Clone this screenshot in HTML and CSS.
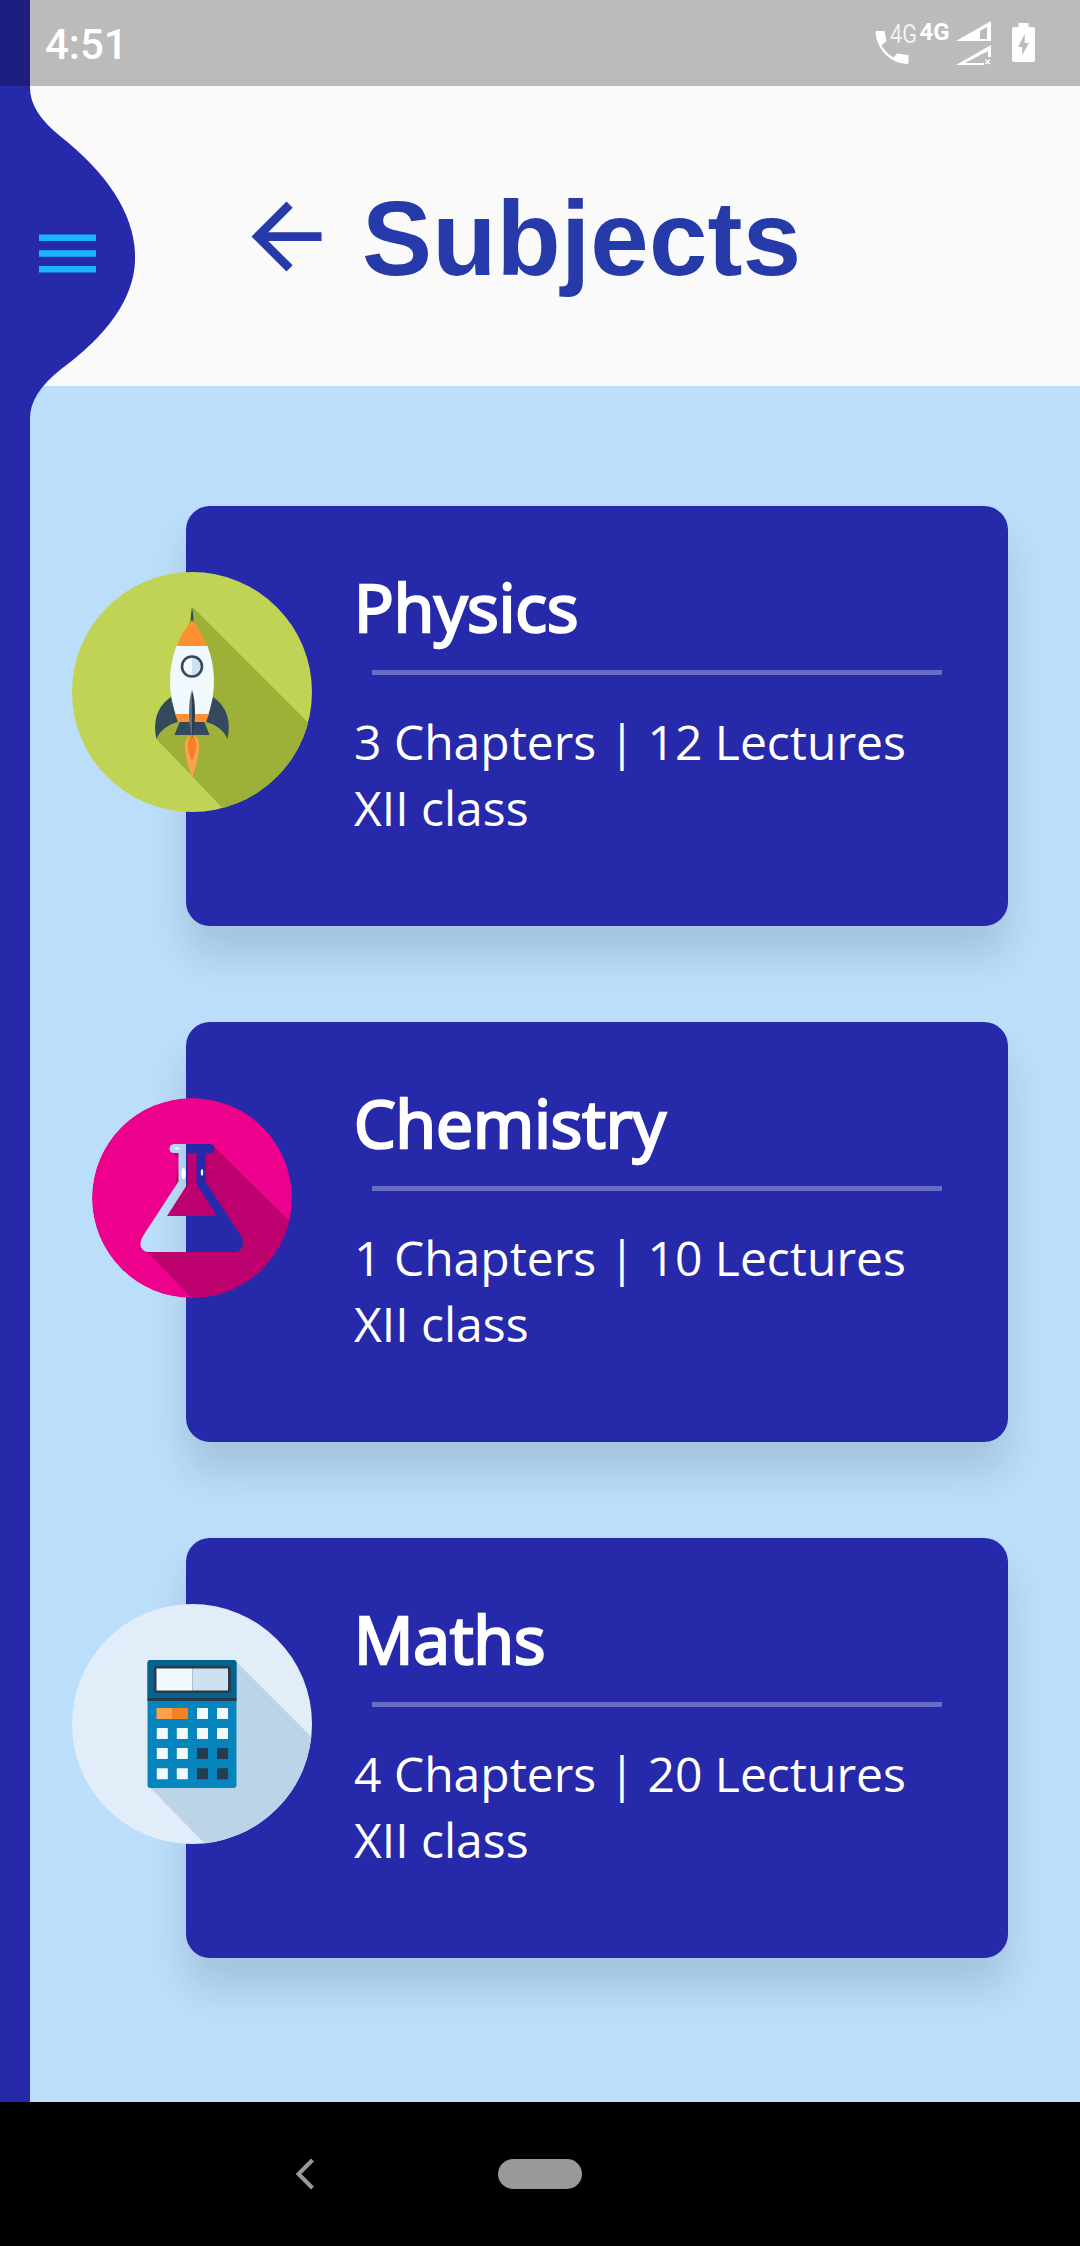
FILE: index.html
```html
<!DOCTYPE html>
<html lang="en">
<head>
<meta charset="utf-8">
<title>Subjects</title>
<link rel="stylesheet" href="styles.css">
</head>
<body>
<div class="app">
  <header class="header">
    <div class="status">
      <span class="clock">4:51</span>
      <svg class="status-icons" width="168" height="86" viewBox="872 0 168 86" fill="#fff">
        <path d="M876 31H884.5L886.5 41L881.5 45.5Q886.500 53.500 893.500 57.500L897 53.500L908.500 55V62.500Q908.500 64 906.500 64Q893 63 884 53Q876.500 44 875.500 32.500Z"/>
        <text class="net-thin" x="890" y="43" textLength="27" lengthAdjust="spacingAndGlyphs">4G</text>
        <text class="net-bold" x="919.500" y="39.500" textLength="30" lengthAdjust="spacingAndGlyphs">4G</text>
        <path fill-rule="evenodd" d="M956 41L991 21V41ZM980 31V39H987V27Z"/>
        <path fill-rule="evenodd" d="M956 65L991 45V57H988V51L965 63H984V65Z"/>
        <path d="M985.500 59.500L990 64M990 59.500L985.500 64" stroke="#fff" stroke-width="1.500"/>
        <path fill-rule="evenodd" d="M1018.500 23H1028.500V27H1033Q1035 27 1035 29V60Q1035 62 1033 62H1014Q1012 62 1012 60V29Q1012 27 1014 27H1018.500ZM1024.700 34L1018 47H1022.200V55L1029 43H1024.700Z"/>
      </svg>
    </div>
    <div class="title-row">
      <svg class="back" viewBox="0 0 24 24" fill="#263aa9"><path d="M20 11H7.830l5.590-5.590L12 4l-8 8 8 8 1.410-1.410L7.830 13H20v-2z"/></svg>
      <h1 class="title">Subjects</h1>
    </div>
  </header>

  <main class="list">
    <article class="card">
      <svg class="badge" width="240" height="240" viewBox="0 0 240 240">
        <clipPath id="disc"><circle cx="120" cy="120" r="120"/></clipPath>
        <circle cx="120" cy="120" r="120" fill="#c0d355"/>
        <path clip-path="url(#disc)" fill="#9db038" d="M120.500 35L245 159.500V245H159L84.500 167L110 90Z"/>
        <path d="M120 35Q118.700 42 118.700 50H121.500Q121.500 42 120 35Z" fill="#34495e"/>
        <path d="M99 125C84 135 81 151 84.500 167C88 158 97 152 106 150ZM141 125C156 135 159 151 155.500 167C152 158 143 152 134 150Z" fill="#34495e"/>
        <path d="M108 149H132L137.500 163H102.500Z" fill="#34495e"/>
        <path d="M105 73C95 98 97 122 103.500 142H136.500C143 122 145 98 135 73Z" fill="#f2f9ff"/>
        <path d="M105 74Q110 60 120 48Q130 60 135 74Z" fill="#ff9031"/>
        <path d="M103 142H137L134 150H106Z" fill="#ff9031"/>
        <path d="M120 85A9.500 9.500 0 0 0 120 104Z" fill="#f2f9ff"/><path d="M120 85A9.500 9.500 0 0 1 120 104Z" fill="#cfe1f1"/>
        <circle cx="120" cy="94.500" r="10" fill="none" stroke="#34495e" stroke-width="2.600"/>
        <path d="M120 163C112 165 112 174 113.500 181Q115.500 194 120 206Q124.500 194 126.500 181C128 174 128 165 120 163Z" fill="#ff9f50"/>
        <path d="M120 163C114 168 115 180 120 189C125 180 126 168 120 163Z" fill="#f48224"/>
        <path d="M120 118C116 130 116 150 120 166Z" fill="#5d6d7e"/><path d="M120 118C124 130 124 150 120 166Z" fill="#2b3d50"/>
      </svg>
      <h2 class="name">Physics</h2>
      <div class="rule"></div>
      <p class="info">3 Chapters | 12 Lectures<br>XII class</p>
    </article>

    <article class="card">
      <svg class="badge badge-small" width="200" height="200" viewBox="0 0 200 200">
        <mask id="flask">
          <circle cx="100" cy="100" r="100" fill="#fff"/>
          <path fill="#000" d="M82 46H118Q122.500 46.500 122.500 50.500Q122.500 55 118 55H113.500V83.500L149 138Q153 145 150 149.500Q147 154 142 154H57Q51 154 49 149Q47 145 51 138L86.500 83.500V55H82Q77.500 55 77.500 50.500Q77.500 46.500 82 46Z"/>
          <path fill="#fff" d="M95.500 55H104.500V86L125 118H75L95.500 86Z"/>
        </mask>
        <clipPath id="disc-small"><circle cx="100" cy="100" r="100"/></clipPath>
        <g mask="url(#flask)">
          <circle cx="100" cy="100" r="100" fill="#ed008c"/>
          <path clip-path="url(#disc-small)" fill="#bc006e" d="M121.500 48L205 130.500V205H104.500L54 153L80 110L87 61L81 55L95 50Z"/>
        </g>
        <ellipse cx="91.500" cy="75.500" rx="2.200" ry="5.500" fill="#fff"/><ellipse cx="110" cy="74.500" rx="1.200" ry="3.300" fill="#fff"/><ellipse cx="85" cy="50.500" rx="2.800" ry="1" fill="#fff"/>
      </svg>
      <h2 class="name">Chemistry</h2>
      <div class="rule"></div>
      <p class="info">1 Chapters | 10 Lectures<br>XII class</p>
    </article>

    <article class="card">
      <svg class="badge" width="240" height="240" viewBox="0 0 240 240">
        <circle cx="120" cy="120" r="120" fill="#e1eefa"/>
        <path clip-path="url(#disc)" fill="#bcd4e8" d="M164 57.500L245 138.500V245H138L78 183.500Z"/>
        <rect x="75.500" y="56" width="89" height="128" rx="3" fill="#0684bc"/>
        <path d="M75.500 94V59Q75.500 56 78.500 56H161.500Q164.500 56 164.500 59V94Z" fill="#04638d"/>
        <path d="M75.500 94H164.500V97H75.500Z" fill="#273b50"/>
        <rect x="82" y="62" width="77" height="27" rx="3" fill="#273b50"/>
        <path d="M84.500 64.500H120.500V86.500H84.500Z" fill="#f2f9ff"/><path d="M120.500 64.500H156V86.500H120.500Z" fill="#cfe1f1"/>
        <path d="M84.500 104H100V115H84.500Z" fill="#ff9f50"/><path d="M100 104H116V115H100Z" fill="#f48224"/>
        <path fill="#f2f9ff" d="M125 104h11v11h-11zM145 104h11v11h-11zM84.800 124h11v11h-11zM104.800 124h11v11h-11zM125 124h11v11h-11zM145 124h11v11h-11zM84.800 144h11v11h-11zM104.800 144h11v11h-11zM84.800 164.200h11v11h-11zM104.800 164.200h11v11h-11z"/>
        <path fill="#273b50" d="M125 144h11v11h-11zM145 144h11v11h-11zM125 164.200h11v11h-11zM145 164.200h11v11h-11z"/>
      </svg>
      <h2 class="name">Maths</h2>
      <div class="rule"></div>
      <p class="info">4 Chapters | 20 Lectures<br>XII class</p>
    </article>
  </main>

  <svg class="drawer" width="135" height="2102" viewBox="0 0 135 2102">
    <path fill="#262aaa" d="M0 0H30V88Q30 112 60 136Q132 193 135 253Q138 313 60 370Q30 394 30 418V2102H0Z"/>
    <path fill="#000" fill-opacity=".25" d="M0 0H30V86H0Z"/>
    <path fill="#1bb5fd" d="M39 234.600h57v6.500h-57zM39 250.300h57v6.500h-57zM39 266.100h57v6.500h-57z"/>
  </svg>

  <nav class="nav">
    <svg class="nav-back" width="20" height="32" viewBox="0 0 20 32"><path d="M17.500 2L3.500 16L17.500 30" fill="none" stroke="#999" stroke-width="4"/></svg>
    <div class="pill"></div>
  </nav>
</div>
</body>
</html>
```
FILE: styles.css
```css
* { box-sizing: border-box; }
body { margin: 0; }
.app {
  position: relative;
  display: flex;
  flex-direction: column;
  width: 1080px;
  height: 2246px;
  background: #bbdefb;
  overflow: hidden;
}
.header { height: 386px; background: #fafafa; }
.status {
  display: flex;
  justify-content: space-between;
  align-items: center;
  height: 86px;
  padding: 0 40px 0 45px;
  background: #bbb;
}
.clock {
  color: #fff;
  font: 500 42px/50px Roboto, sans-serif;
  padding-top: 4px;
}
.net-thin { font: 400 25px Roboto, sans-serif; opacity: .8; }
.net-bold { font: 700 24px Roboto, sans-serif; }
.title-row {
  display: flex;
  align-items: flex-start;
  padding: 92px 0 0 234px;
}
.back { width: 105px; height: 105px; margin-top: 6px; }
.title {
  margin: 1px 0 0 23px;
  color: #263aa9;
  font: 700 105px/120px "Liberation Sans", Arial, sans-serif;
  letter-spacing: .2px;
}
.list {
  flex: 1;
  display: flex;
  flex-direction: column;
  gap: 96px;
  padding: 120px 72px 0 186px;
}
.card {
  position: relative;
  height: 420px;
  padding: 52px 66px 0 168px;
  border-radius: 24px;
  background: #262aaa;
  box-shadow: 0 30px 38px rgba(0, 0, 0, .12);
  color: #fff;
  font-family: "Open Sans", "Noto Sans", sans-serif;
}
.badge { position: absolute; left: -114px; top: 66px; }
.badge-small { left: -94px; top: 76px; }
.name {
  margin: 0;
  font-size: 66px;
  font-weight: 400;
  line-height: 96px;
  -webkit-text-stroke: 2.6px #fff;
}
.rule { height: 4.5px; margin: 16px 0 0 18px; background: #6a6cc4; }
.info {
  margin: 34.5px 0 0;
  font-size: 48px;
  line-height: 66px;
}
.drawer { position: absolute; left: 0; top: 0; }
.nav {
  display: flex;
  align-items: center;
  height: 144px;
  padding-left: 295px;
  background: #000;
}
.pill {
  width: 84px;
  height: 30px;
  margin-left: 183px;
  border-radius: 15px;
  background: #999;
}
```
